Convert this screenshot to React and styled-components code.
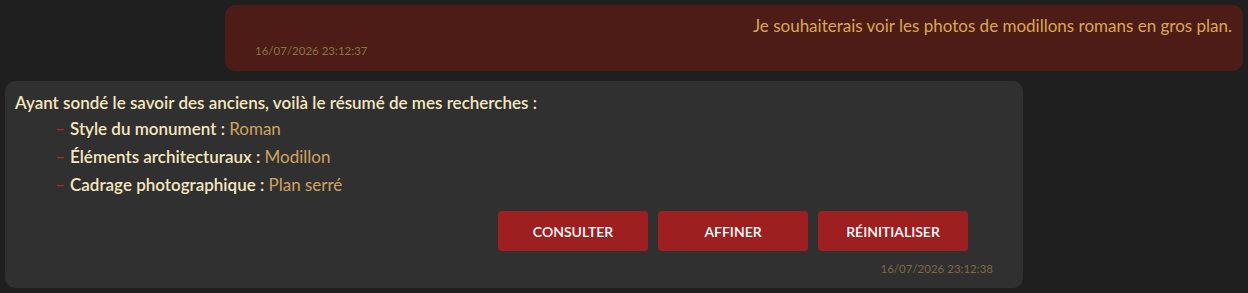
import React from "react";
import styled, { createGlobalStyle } from "styled-components";

const GlobalStyle = createGlobalStyle`
  html, body {
    margin: 0;
    padding: 0;
    background: #1f1f1f;
  }
  body {
    font-family: Lato, "Noto Sans", sans-serif;
  }
`;

const Thread = styled.div`
  display: flex;
  flex-direction: column;
  gap: 10px;
  padding: 5px;
  width: 1238px;
`;

const Bubble = styled.div`
  width: 1018px;
  box-sizing: border-box;
  border-radius: 10px;
  display: flex;
  flex-direction: column;
  align-self: ${(p) => (p.$mine ? "flex-end" : "flex-start")};
  background: ${(p) => (p.$mine ? "#4d1c16" : "#303030")};
  padding: ${(p) => (p.$mine ? "9px 11px 12px 30px" : "10px 10px 11px 10px")};
`;

const UserText = styled.div`
  text-align: right;
  color: #dca84f;
  font-size: 17px;
  line-height: 24px;
`;

const Stamp = styled.div`
  font-size: 11.5px;
  line-height: 16px;
  color: ${(p) => (p.$mine ? "#8c7340" : "#7c6a42")};
  align-self: ${(p) => (p.$mine ? "flex-start" : "flex-end")};
  margin-top: ${(p) => (p.$mine ? "5px" : "10px")};
  margin-right: ${(p) => (p.$mine ? "0" : "20px")};
`;

const Intro = styled.div`
  color: #f6e7bf;
  font-size: 17px;
  font-weight: 600;
  line-height: 24px;
`;

const List = styled.ul`
  list-style: none;
  margin: 0;
  padding: 0 0 0 40px;
`;

const Item = styled.li`
  display: flex;
  align-items: center;
  font-size: 17px;
  line-height: 28px;
  color: #f6e7bf;
`;

const Dash = styled.span`
  color: #c0241f;
  width: 15px;
  flex: none;
`;

const Label = styled.span`
  font-weight: 600;
  white-space: pre;
`;

const Value = styled.span`
  color: #cfa35e;
`;

const Actions = styled.div`
  display: flex;
  justify-content: flex-end;
  gap: 10px;
  margin: 12px 45px 0 0;
`;

const Button = styled.button`
  width: 150px;
  height: 40px;
  border: none;
  border-radius: 4px;
  background: #9e1f1f;
  color: #ffffff;
  font-family: Lato, "Noto Sans", sans-serif;
  font-size: 14px;
  font-weight: 600;
  cursor: pointer;
`;

const criteria = [
  ["Style du monument", "Roman"],
  ["Éléments architecturaux", "Modillon"],
  ["Cadrage photographique", "Plan serré"],
];

export default function App() {
  return (
    <>
      <GlobalStyle />
      <Thread>
        <Bubble $mine>
          <UserText>
            Je souhaiterais voir les photos de modillons romans en gros plan.
          </UserText>
          <Stamp $mine>16/07/2026 23:12:37</Stamp>
        </Bubble>
        <Bubble>
          <Intro>
            Ayant sondé le savoir des anciens, voilà le résumé de mes recherches :
          </Intro>
          <List>
            {criteria.map(([label, value]) => (
              <Item key={label}>
                <Dash>–</Dash>
                <Label>{label} : </Label>
                <Value>{value}</Value>
              </Item>
            ))}
          </List>
          <Actions>
            <Button>CONSULTER</Button>
            <Button>AFFINER</Button>
            <Button>RÉINITIALISER</Button>
          </Actions>
          <Stamp>16/07/2026 23:12:38</Stamp>
        </Bubble>
      </Thread>
    </>
  );
}
